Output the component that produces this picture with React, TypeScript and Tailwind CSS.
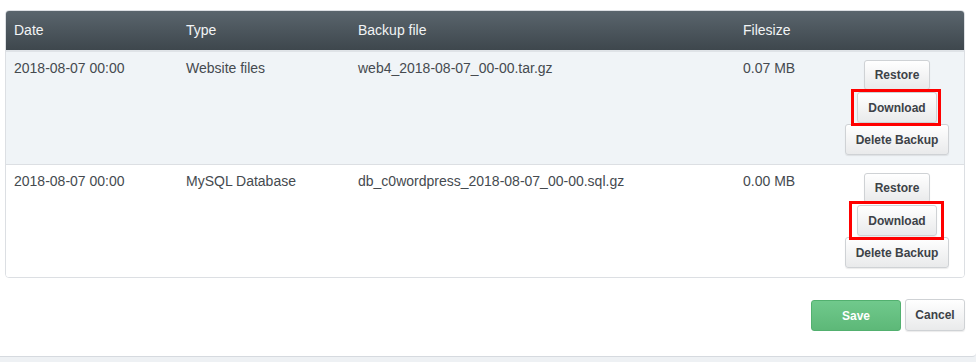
import React from "react";

type Backup = {
  date: string;
  type: string;
  file: string;
  size: string;
  mark: string; // red annotation box around Download
};

const backups: Backup[] = [
  {
    date: "2018-08-07 00:00",
    type: "Website files",
    file: "web4_2018-08-07_00-00.tar.gz",
    size: "0.07 MB",
    mark: "-left-[6px] -right-[4px] -top-[3px] -bottom-[3px]",
  },
  {
    date: "2018-08-07 00:00",
    type: "MySQL Database",
    file: "db_c0wordpress_2018-08-07_00-00.sql.gz",
    size: "0.00 MB",
    mark: "-left-[8px] -right-[7px] -top-[4px] -bottom-[4px]",
  },
];

const cols = "grid grid-cols-[172px_172px_385px_95px_134px]";

function Btn({ children, className = "" }: { children: React.ReactNode; className?: string }) {
  return (
    <button
      className={
        "h-[30px] rounded-[3px] border border-[#cfd2d5] bg-gradient-to-b from-white to-[#e9eaeb] px-[10px] text-[12px] font-bold text-[#3d4247] shadow-[0_1px_1px_rgba(0,0,0,0.08)] " +
        className
      }
    >
      {children}
    </button>
  );
}

export default function App() {
  return (
    <div className="min-h-[362px] bg-[#eef1f4] font-['Liberation_Sans',Arial,sans-serif]">
      <div className="h-[357px] rounded-br-[4px] border-b border-[#d6dadf] bg-white pt-[10px]">
        {/* Backups table */}
        <div className="ml-[5px] w-[960px] overflow-hidden rounded-[4px] border border-[#dcdfe3]">
          <div className={cols + " h-[39px] items-center bg-gradient-to-b from-[#5a656d] to-[#3e474d] text-[14px] text-[#f2f4f5]"}>
            <div className="pl-[8px]">Date</div>
            <div className="pl-[8px]">Type</div>
            <div className="pl-[8px]">Backup file</div>
            <div className="pl-[8px]">Filesize</div>
            <div />
          </div>
          <div className="h-[2px] bg-[#dfe3e7]" />
          {backups.map((b, i) => (
            <div
              key={b.file}
              className={
                cols +
                " text-[14px] leading-5 text-[#454a4f] " +
                (i === 0 ? "h-[113px] border-b border-[#dcdfe3] bg-[#f0f4f7]" : "h-[112px] bg-white")
              }
            >
              <div className="pl-[8px] pt-[6px]">{b.date}</div>
              <div className="pl-[8px] pt-[6px]">{b.type}</div>
              <div className="pl-[8px] pt-[6px]">{b.file}</div>
              <div className="pl-[8px] pt-[6px]">{b.size}</div>
              <div className="flex flex-col items-center pt-[8px]">
                <Btn>Restore</Btn>
                <div className="relative mt-[2px]">
                  <Btn className="h-[31px]">Download</Btn>
                  <span className={"pointer-events-none absolute border-[3px] border-[#ff0000] " + b.mark} />
                </div>
                <Btn className="mt-[1px] h-[31px]">Delete Backup</Btn>
              </div>
            </div>
          ))}
        </div>

        {/* Form actions */}
        <div className="mt-[21px] flex items-end justify-end gap-[4px] pr-[11px]">
          <button className="h-[31px] w-[90px] rounded-[3px] border border-[#52b06f] bg-gradient-to-b from-[#70c98c] to-[#5db878] text-[12px] font-bold text-white">
            Save
          </button>
          <button className="h-[32px] w-[60px] rounded-[3px] border border-[#cfd2d5] bg-gradient-to-b from-white to-[#e9eaeb] text-[12px] font-bold text-[#3d4247] shadow-[0_1px_1px_rgba(0,0,0,0.08)]">
            Cancel
          </button>
        </div>
      </div>
    </div>
  );
}
